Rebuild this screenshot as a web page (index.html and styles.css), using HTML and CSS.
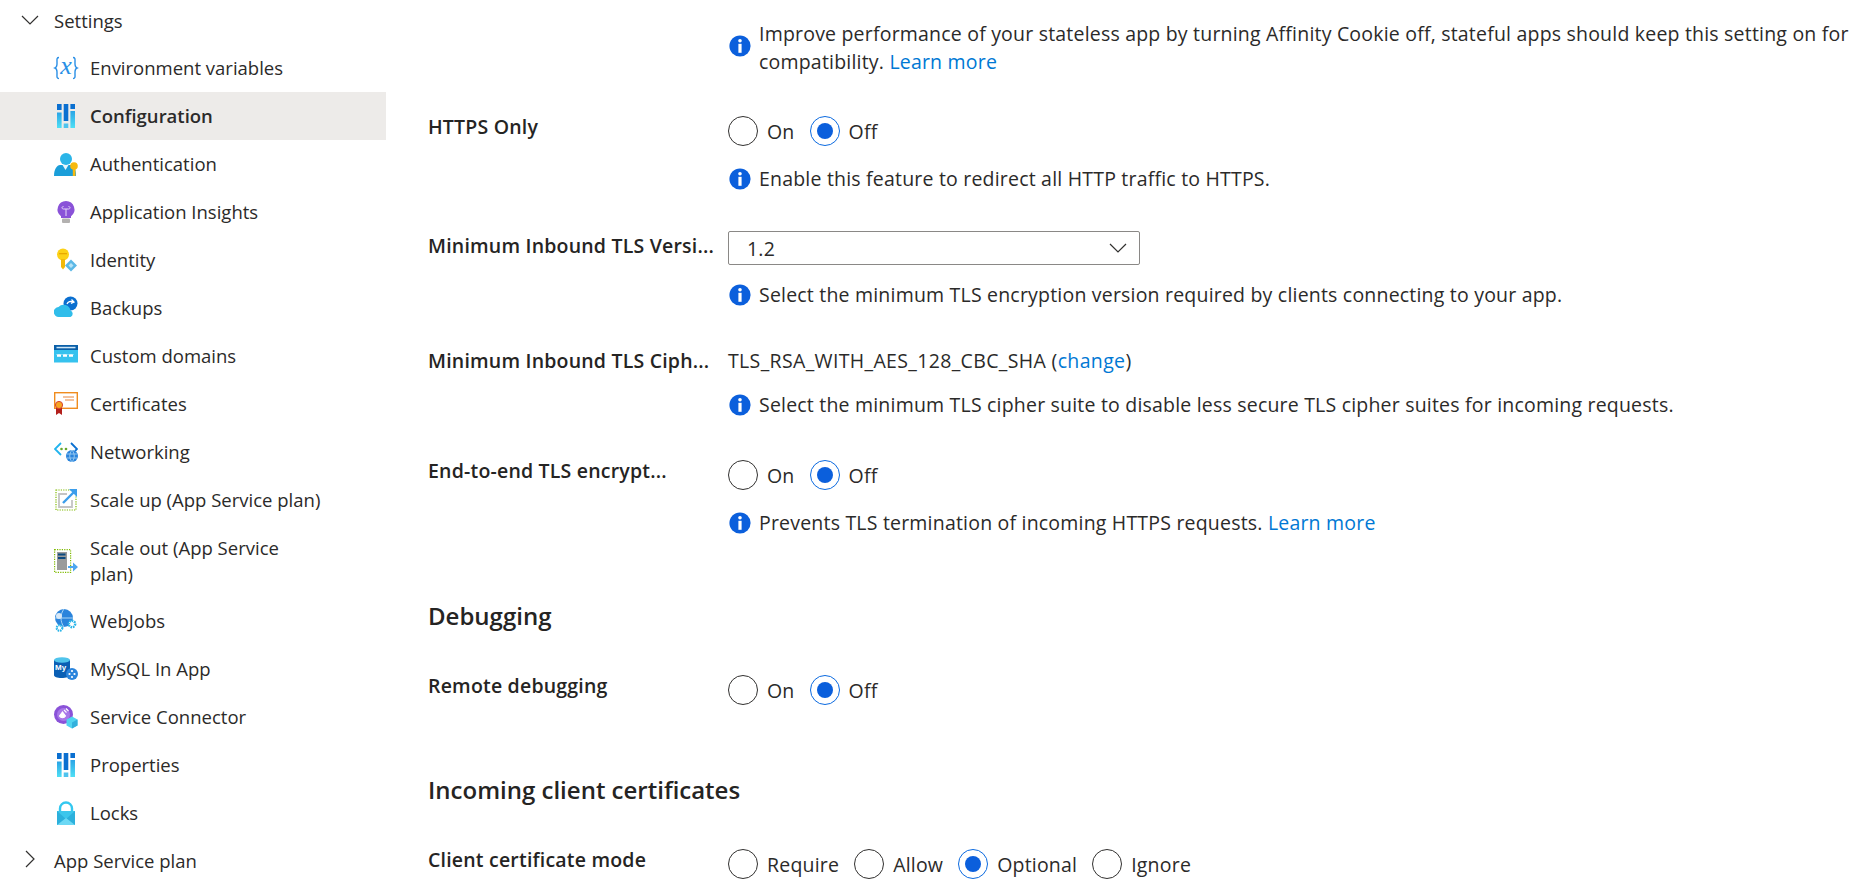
FILE: index.html
```html
<!DOCTYPE html>
<html lang="en">
<head>
    <meta charset="UTF-8">
    <title>Configuration</title>
    <link rel="stylesheet" href="styles.css">
</head>
<body>

<svg class="defs" width="0" height="0">
    <defs>
        <linearGradient id="sky" x1="0" y1="0" x2="0" y2="1"><stop offset="0" stop-color="#2aa4e6"/><stop offset="1" stop-color="#50e0f5"/></linearGradient>
        <symbol id="bars" viewBox="0 0 24 24">
            <rect x="3" y="0" width="4.6" height="6" fill="#0a6fd0"/>
            <rect x="3" y="8.5" width="4.6" height="15.5" fill="url(#sky)"/>
            <rect x="9.7" y="0" width="4.6" height="17" fill="#0a6fd0"/>
            <rect x="9.7" y="19.5" width="4.6" height="4.5" fill="#4fc3ee"/>
            <rect x="16.4" y="0" width="4.6" height="5" fill="#0a6fd0"/>
            <rect x="16.4" y="7" width="4.6" height="17" fill="url(#sky)"/>
        </symbol>
        <symbol id="info" viewBox="0 0 22 22">
            <circle cx="11" cy="11" r="10.6" fill="#0b5fdc"/>
            <circle cx="11" cy="5.8" r="1.8" fill="#fff"/>
            <rect x="9.4" y="8.8" width="3.2" height="9" fill="#fff"/>
        </symbol>
    </defs>
</svg>

<div class="page">
    <nav class="sidebar">
        <div class="group-row group-first">
            <svg class="chevron" width="18" height="18" viewBox="0 0 18 18"><path d="M1 5l8 8 8-8" fill="none" stroke="#323130" stroke-width="1.2"/></svg>
            <span>Settings</span>
        </div>
        <div class="nav-item">
            <svg class="nav-icon icon-env" viewBox="0 0 24 24"><path d="M5 1.500C2.500 1.500 3 3.500 3 6s.5 5-2 6c2.500 1 2 3.500 2 6s-.5 4.500 2 4.500M19 1.500c2.500 0 2 2 2 4.500s-.5 5 2 6c-2.500 1-2 3.500-2 6s.5 4.500-2 4.500" fill="none" stroke="#2a8fe6" stroke-width="1.400"/><text x="12" y="18" text-anchor="middle" class="icon-x">x</text></svg>
            <span>Environment variables</span>
        </div>
        <div class="nav-item active">
            <svg class="nav-icon"><use href="#bars"/></svg>
            <span>Configuration</span>
        </div>
        <div class="nav-item">
            <svg class="nav-icon" viewBox="0 0 24 24">
                <circle cx="12" cy="7" r="6" fill="#2bb5e8"/>
                <path d="M0 24c0-7 3-11 6-11h11c3 0 5 4 5 11z" fill="#1a9ed9"/>
                <path d="M8.500 13h6l-3 5z" fill="#e8f6fc"/>
                <circle cx="20" cy="14" r="3.800" fill="#f6b90f"/>
                <rect x="18.800" y="15" width="2.600" height="9" fill="#f6b90f"/>
            </svg>
            <span>Authentication</span>
        </div>
        <div class="nav-item">
            <svg class="nav-icon" viewBox="0 0 24 24">
                <path d="M12 1a8.500 8.500 0 0 0-5 15.300V18h10v-1.700A8.500 8.500 0 0 0 12 1z" fill="#8a52d8"/>
                <path d="M9.500 6.500c-2 0-2 2.500 0 2.500h5c2 0 2-2.500 0-2.500M12 9v7" fill="none" stroke="#e6d8f8" stroke-width="1"/>
                <rect x="8" y="18.500" width="8" height="4.500" rx="1" fill="#b3b1b0"/>
            </svg>
            <span>Application Insights</span>
        </div>
        <div class="nav-item">
            <svg class="nav-icon" viewBox="0 0 24 24">
                <circle cx="9" cy="6.500" r="6" fill="#fcd116"/>
                <rect x="5" y="5" width="8" height="1.300" fill="#e8a800"/>
                <path d="M7 11h4v8l-2 2.500-2-2.500z" fill="#f2b90c"/>
                <path d="M17 11.500l6 6-6 6-6-6z" fill="#5cb8e6"/>
                <path d="M17 15l2.500 2.500-2.500 2.500-2.500-2.500z" fill="#b5e3f7"/>
            </svg>
            <span>Identity</span>
        </div>
        <div class="nav-item">
            <svg class="nav-icon" viewBox="0 0 24 24">
                <circle cx="16.500" cy="7.500" r="7" fill="#0a6fd0"/>
                <path d="M5 21a5 5 0 0 1-.5-10 7 7 0 0 1 12 3.500 3.500 3.500 0 0 1 0 6.500z" fill="#30bdea"/>
                <path d="M13 8c1-2.500 3.500-3 6-2M17.500 3.500L20 6l-3 1.500" fill="none" stroke="#fff" stroke-width="1.300"/>
            </svg>
            <span>Backups</span>
        </div>
        <div class="nav-item">
            <svg class="nav-icon" viewBox="0 0 24 24">
                <rect x="0" y="1" width="24" height="6" fill="#0a5fa8"/>
                <rect x="2.500" y="2.800" width="19" height="1.500" fill="#cfe7f7"/>
                <rect x="0" y="6" width="24" height="12.500" fill="#36c2ee"/>
                <path d="M3 10l1 3 1-3 1 3 1-3M9 10l1 3 1-3 1 3 1-3M15 10l1 3 1-3 1 3 1-3" fill="none" stroke="#fff" stroke-width="1"/>
            </svg>
            <span>Custom domains</span>
        </div>
        <div class="nav-item">
            <svg class="nav-icon" viewBox="0 0 24 24">
                <rect x="0.700" y="0.700" width="22.600" height="15.600" fill="#fff" stroke="#f08c1e" stroke-width="1.400"/>
                <path d="M9 5h11M11 8h9" stroke="#e8853a" stroke-width="1"/>
                <path d="M2 16h6v7l-3-2-3 2z" fill="#b3201c"/>
                <circle cx="5" cy="13" r="3.600" fill="#f6a623" stroke="#d8412f" stroke-width="1"/>
            </svg>
            <span>Certificates</span>
        </div>
        <div class="nav-item">
            <svg class="nav-icon" viewBox="0 0 24 24">
                <path d="M7 3L1 9l6 6" fill="none" stroke="#22b4ee" stroke-width="1.800"/>
                <path d="M17 3l6 6-2 2" fill="none" stroke="#0a6fd0" stroke-width="1.800"/>
                <circle cx="7.500" cy="9" r="1.300" fill="#68a62c"/>
                <circle cx="12" cy="9" r="1.300" fill="#68a62c"/>
                <circle cx="18" cy="16" r="6" fill="#2a84dc"/>
                <path d="M13 14h10M13 18h10M18 10c-3 4-3 8 0 12M18 10c3 4 3 8 0 12" fill="none" stroke="#a8d4f4" stroke-width=".8"/>
            </svg>
            <span>Networking</span>
        </div>
        <div class="nav-item">
            <svg class="nav-icon" viewBox="0 0 24 24">
                <rect x="2" y="2" width="20" height="20" fill="none" stroke="#7fba00" stroke-width="1.200" stroke-dasharray="1.200 1.200"/>
                <path d="M13 6H5v13h13v-7" fill="none" stroke="#c4c4c4" stroke-width="1.800"/>
                <path d="M9 15L20 4" stroke="#3c9eeb" stroke-width="2.400"/>
                <path d="M15 1h8v8z" fill="#3c9eeb"/>
            </svg>
            <span>Scale up (App Service plan)</span>
        </div>
        <div class="nav-item nav-item-tall">
            <svg class="nav-icon" viewBox="0 0 24 24">
                <rect x="0.600" y="0.600" width="16" height="22.800" fill="none" stroke="#7fba00" stroke-width="1.200" stroke-dasharray="1.200 1.200"/>
                <rect x="3" y="3" width="10" height="18" fill="#9b9b9b"/>
                <rect x="4" y="4.500" width="7.500" height="2" fill="#0d4a80"/>
                <rect x="4" y="8" width="7.500" height="2" fill="#0d4a80"/>
                <path d="M14 17h5v-3.500l5 4.500-5 4.500V19h-5z" fill="#4da6f0"/>
            </svg>
            <span>Scale out (App Service<br>plan)</span>
        </div>
        <div class="nav-item">
            <svg class="nav-icon" viewBox="0 0 24 24">
                <circle cx="10" cy="9" r="9" fill="#2a84dc"/>
                <path d="M1 9h18M10 0c-4 5-4 13 0 18" fill="none" stroke="#a8d4f4" stroke-width="1"/>
                <circle cx="5" cy="7" r="3" fill="#d8e8f6"/>
                <circle cx="18" cy="15" r="3.200" fill="#fff" stroke="#2bb5e8" stroke-width="2.400" stroke-dasharray="1.600 .8"/>
                <circle cx="5.500" cy="19" r="2.800" fill="#fff" stroke="#2bb5e8" stroke-width="2.200" stroke-dasharray="1.500 .8"/>
            </svg>
            <span>WebJobs</span>
        </div>
        <div class="nav-item">
            <svg class="nav-icon" viewBox="0 0 24 24">
                <path d="M0 3v15c0 2 3 3 7.500 3S16 20 16 18V3z" fill="#0a5fb4"/>
                <ellipse cx="8" cy="3" rx="8" ry="2.800" fill="#50c4ec"/>
                <text x="1" y="13" class="icon-my">My</text>
                <circle cx="18" cy="17" r="6" fill="#2a84dc"/>
                <circle cx="15.500" cy="17" r="1.100" fill="#fff"/>
                <circle cx="20.500" cy="17" r="1.100" fill="#fff"/>
                <circle cx="18" cy="14" r="1.100" fill="#fff"/>
                <circle cx="18" cy="20" r="1.100" fill="#fff"/>
            </svg>
            <span>MySQL In App</span>
        </div>
        <div class="nav-item">
            <svg class="nav-icon" viewBox="0 0 24 24">
                <circle cx="9.500" cy="9.500" r="9.500" fill="#8a52d8"/>
                <circle cx="9.500" cy="9.500" r="6.500" fill="#a878e8"/>
                <path d="M5.500 11a3.500 3.500 0 0 0 6 0l-3-4zM10 5l2.500 2.500M12 3.500l2.500 2.500" fill="#fff" stroke="#fff" stroke-width="1.100"/>
                <path d="M18 11.500l5.500 3v6l-5.500 3-5.500-3v-6z" fill="#50d4f0"/>
                <path d="M18 17.500l5.500-3v6l-5.500 3z" fill="#32b0dc"/>
            </svg>
            <span>Service Connector</span>
        </div>
        <div class="nav-item">
            <svg class="nav-icon"><use href="#bars"/></svg>
            <span>Properties</span>
        </div>
        <div class="nav-item">
            <svg class="nav-icon" viewBox="0 0 24 24">
                <path d="M6 11V7.500a6 6 0 0 1 12 0V11" fill="none" stroke="#33c8f0" stroke-width="2.400"/>
                <rect x="3" y="10" width="18" height="14" fill="#3cc6ec"/>
                <path d="M3 10l9 8 9-8v14H3z" fill="#2cb0dc"/>
                <path d="M3 24l9-7 9 7z" fill="#6cd8f4"/>
            </svg>
            <span>Locks</span>
        </div>
        <div class="group-row group-last">
            <svg class="chevron" width="18" height="18" viewBox="0 0 18 18"><path d="M5 1l8 8-8 8" fill="none" stroke="#323130" stroke-width="1.200"/></svg>
            <span>App Service plan</span>
        </div>
    </nav>

    <main class="content">
        <div class="hint hint-first">
            <svg class="info-icon"><use href="#info"/></svg>
            <p>Improve performance of your stateless app by turning Affinity Cookie off, stateful apps should keep this setting on for<br>compatibility. <a href="#">Learn more</a></p>
        </div>

        <div class="field field-https">
            <label class="field-label">HTTPS Only</label>
            <div class="radios">
                <span class="radio"></span><span class="radio-text">On</span>
                <span class="radio checked"></span><span class="radio-text">Off</span>
            </div>
        </div>
        <div class="hint hint-https">
            <svg class="info-icon"><use href="#info"/></svg>
            <p>Enable this feature to redirect all HTTP traffic to HTTPS.</p>
        </div>

        <div class="field field-version">
            <label class="field-label">Minimum Inbound TLS Versi...</label>
            <div class="select">
                <span>1.2</span>
                <svg width="18" height="10" viewBox="0 0 18 10"><path d="M1 1l8 8 8-8" fill="none" stroke="#323130" stroke-width="1.200"/></svg>
            </div>
        </div>
        <div class="hint hint-tight">
            <svg class="info-icon"><use href="#info"/></svg>
            <p>Select the minimum TLS encryption version required by clients connecting to your app.</p>
        </div>

        <div class="field field-cipher">
            <label class="field-label">Minimum Inbound TLS Ciph...</label>
            <div class="cipher">TLS_RSA_WITH_AES_128_CBC_SHA (<a href="#">change</a>)</div>
        </div>
        <div class="hint hint-tight">
            <svg class="info-icon"><use href="#info"/></svg>
            <p>Select the minimum TLS cipher suite to disable less secure TLS cipher suites for incoming requests.</p>
        </div>

        <div class="field field-e2e">
            <label class="field-label">End-to-end TLS encrypt...</label>
            <div class="radios">
                <span class="radio"></span><span class="radio-text">On</span>
                <span class="radio checked"></span><span class="radio-text">Off</span>
            </div>
        </div>
        <div class="hint hint-https">
            <svg class="info-icon"><use href="#info"/></svg>
            <p>Prevents TLS termination of incoming HTTPS requests. <a href="#">Learn more</a></p>
        </div>

        <h2 class="section-title title-debug">Debugging</h2>
        <div class="field field-remote">
            <label class="field-label">Remote debugging</label>
            <div class="radios">
                <span class="radio"></span><span class="radio-text">On</span>
                <span class="radio checked"></span><span class="radio-text">Off</span>
            </div>
        </div>

        <h2 class="section-title title-certs">Incoming client certificates</h2>
        <div class="field field-remote">
            <label class="field-label">Client certificate mode</label>
            <div class="radios">
                <span class="radio"></span><span class="radio-text">Require</span>
                <span class="radio"></span><span class="radio-text">Allow</span>
                <span class="radio checked"></span><span class="radio-text">Optional</span>
                <span class="radio"></span><span class="radio-text">Ignore</span>
            </div>
        </div>
    </main>
</div>

</body>
</html>
```

FILE: styles.css
```css
html, body {
    margin: 0;
    height: 884px;
    overflow: hidden;
    background: #fff;
}

body {
    font-family: "Open Sans", "Noto Sans", sans-serif;
    font-size: 18.5px;
    color: #2b2a29;
}

a {
    color: #0078d4;
    text-decoration: none;
}

p {
    margin: 0;
}

.defs {
    display: block;
}

.page {
    display: flex;
}

.sidebar {
    width: 386px;
    flex-shrink: 0;
}

.group-row {
    position: relative;
    display: flex;
    align-items: center;
    height: 48px;
    padding-left: 54px;
}

.group-first {
    height: 41px;
    margin-bottom: 3px;
}

.group-last {
    margin-top: -1px;
}

.chevron {
    position: absolute;
    left: 21px;
    top: 50%;
    margin-top: -10px;
}

.nav-item {
    display: flex;
    align-items: center;
    gap: 12px;
    height: 48px;
    padding-left: 54px;
    line-height: 26px;
}

.nav-item-tall {
    height: 73px;
}

.nav-item.active {
    background: #edebe9;
    font-weight: 600;
}

.nav-icon {
    width: 24px;
    height: 24px;
    flex-shrink: 0;
}

.icon-env {
    overflow: visible;
}

.icon-x {
    font-family: "Liberation Serif", serif;
    font-style: italic;
    font-size: 26px;
    fill: #2a8fe6;
}

.icon-my {
    font-family: "Liberation Sans", sans-serif;
    font-weight: 700;
    font-size: 8px;
    fill: #fff;
}

.content {
    flex: 1;
    padding-left: 42px;
    font-size: 19.5px;
    letter-spacing: 0.2px;
}

.hint {
    display: flex;
    align-items: center;
    gap: 8px;
    margin-left: 300px;
    line-height: 28px;
    white-space: nowrap;
}

.info-icon {
    width: 22px;
    height: 22px;
    margin-left: 1px;
    flex-shrink: 0;
}

.hint-first {
    margin-top: 20px;
}

.hint-first .info-icon {
    margin-top: -4px;
}

.hint-https {
    margin-top: 19px;
}

.hint-tight {
    margin-top: 16px;
}

.field {
    display: flex;
    align-items: flex-start;
}

.field-label {
    width: 300px;
    flex-shrink: 0;
    font-weight: 600;
    line-height: 22px;
    white-space: nowrap;
    color: #252423;
}

.field-https {
    margin-top: 40px;
}

.field-version {
    margin-top: 38px;
}

.field-version .field-label {
    padding-top: 4px;
}

.field-cipher {
    margin-top: 38px;
}

.field-cipher .field-label,
.field-cipher .cipher {
    line-height: 28px;
}

.cipher {
    letter-spacing: 0.35px;
}

.field-e2e {
    margin-top: 41px;
}

.field-remote {
    margin-top: 43px;
}

.radios {
    display: flex;
    align-items: center;
    height: 30px;
}

.radio {
    width: 30px;
    height: 30px;
    box-sizing: border-box;
    border: 1px solid #323130;
    border-radius: 50%;
    flex-shrink: 0;
    position: relative;
}

.radio.checked {
    border-color: #0b6ae0;
}

.radio.checked::after {
    content: "";
    position: absolute;
    left: 6px;
    top: 6px;
    width: 16px;
    height: 16px;
    border-radius: 50%;
    background: #0b5fdc;
}

.radio-text {
    margin-left: 9px;
    margin-right: 15px;
}

.select {
    display: flex;
    align-items: center;
    justify-content: space-between;
    width: 412px;
    height: 34px;
    box-sizing: border-box;
    padding: 0 12px 0 18px;
    border: 1px solid #8a8886;
    border-radius: 2px;
}

.section-title {
    margin: 0;
    font-size: 24px;
    font-weight: 600;
    line-height: 32px;
    letter-spacing: 0;
    color: #252423;
}

.title-debug {
    margin-top: 63px;
}

.title-certs {
    margin-top: 69px;
}
```
